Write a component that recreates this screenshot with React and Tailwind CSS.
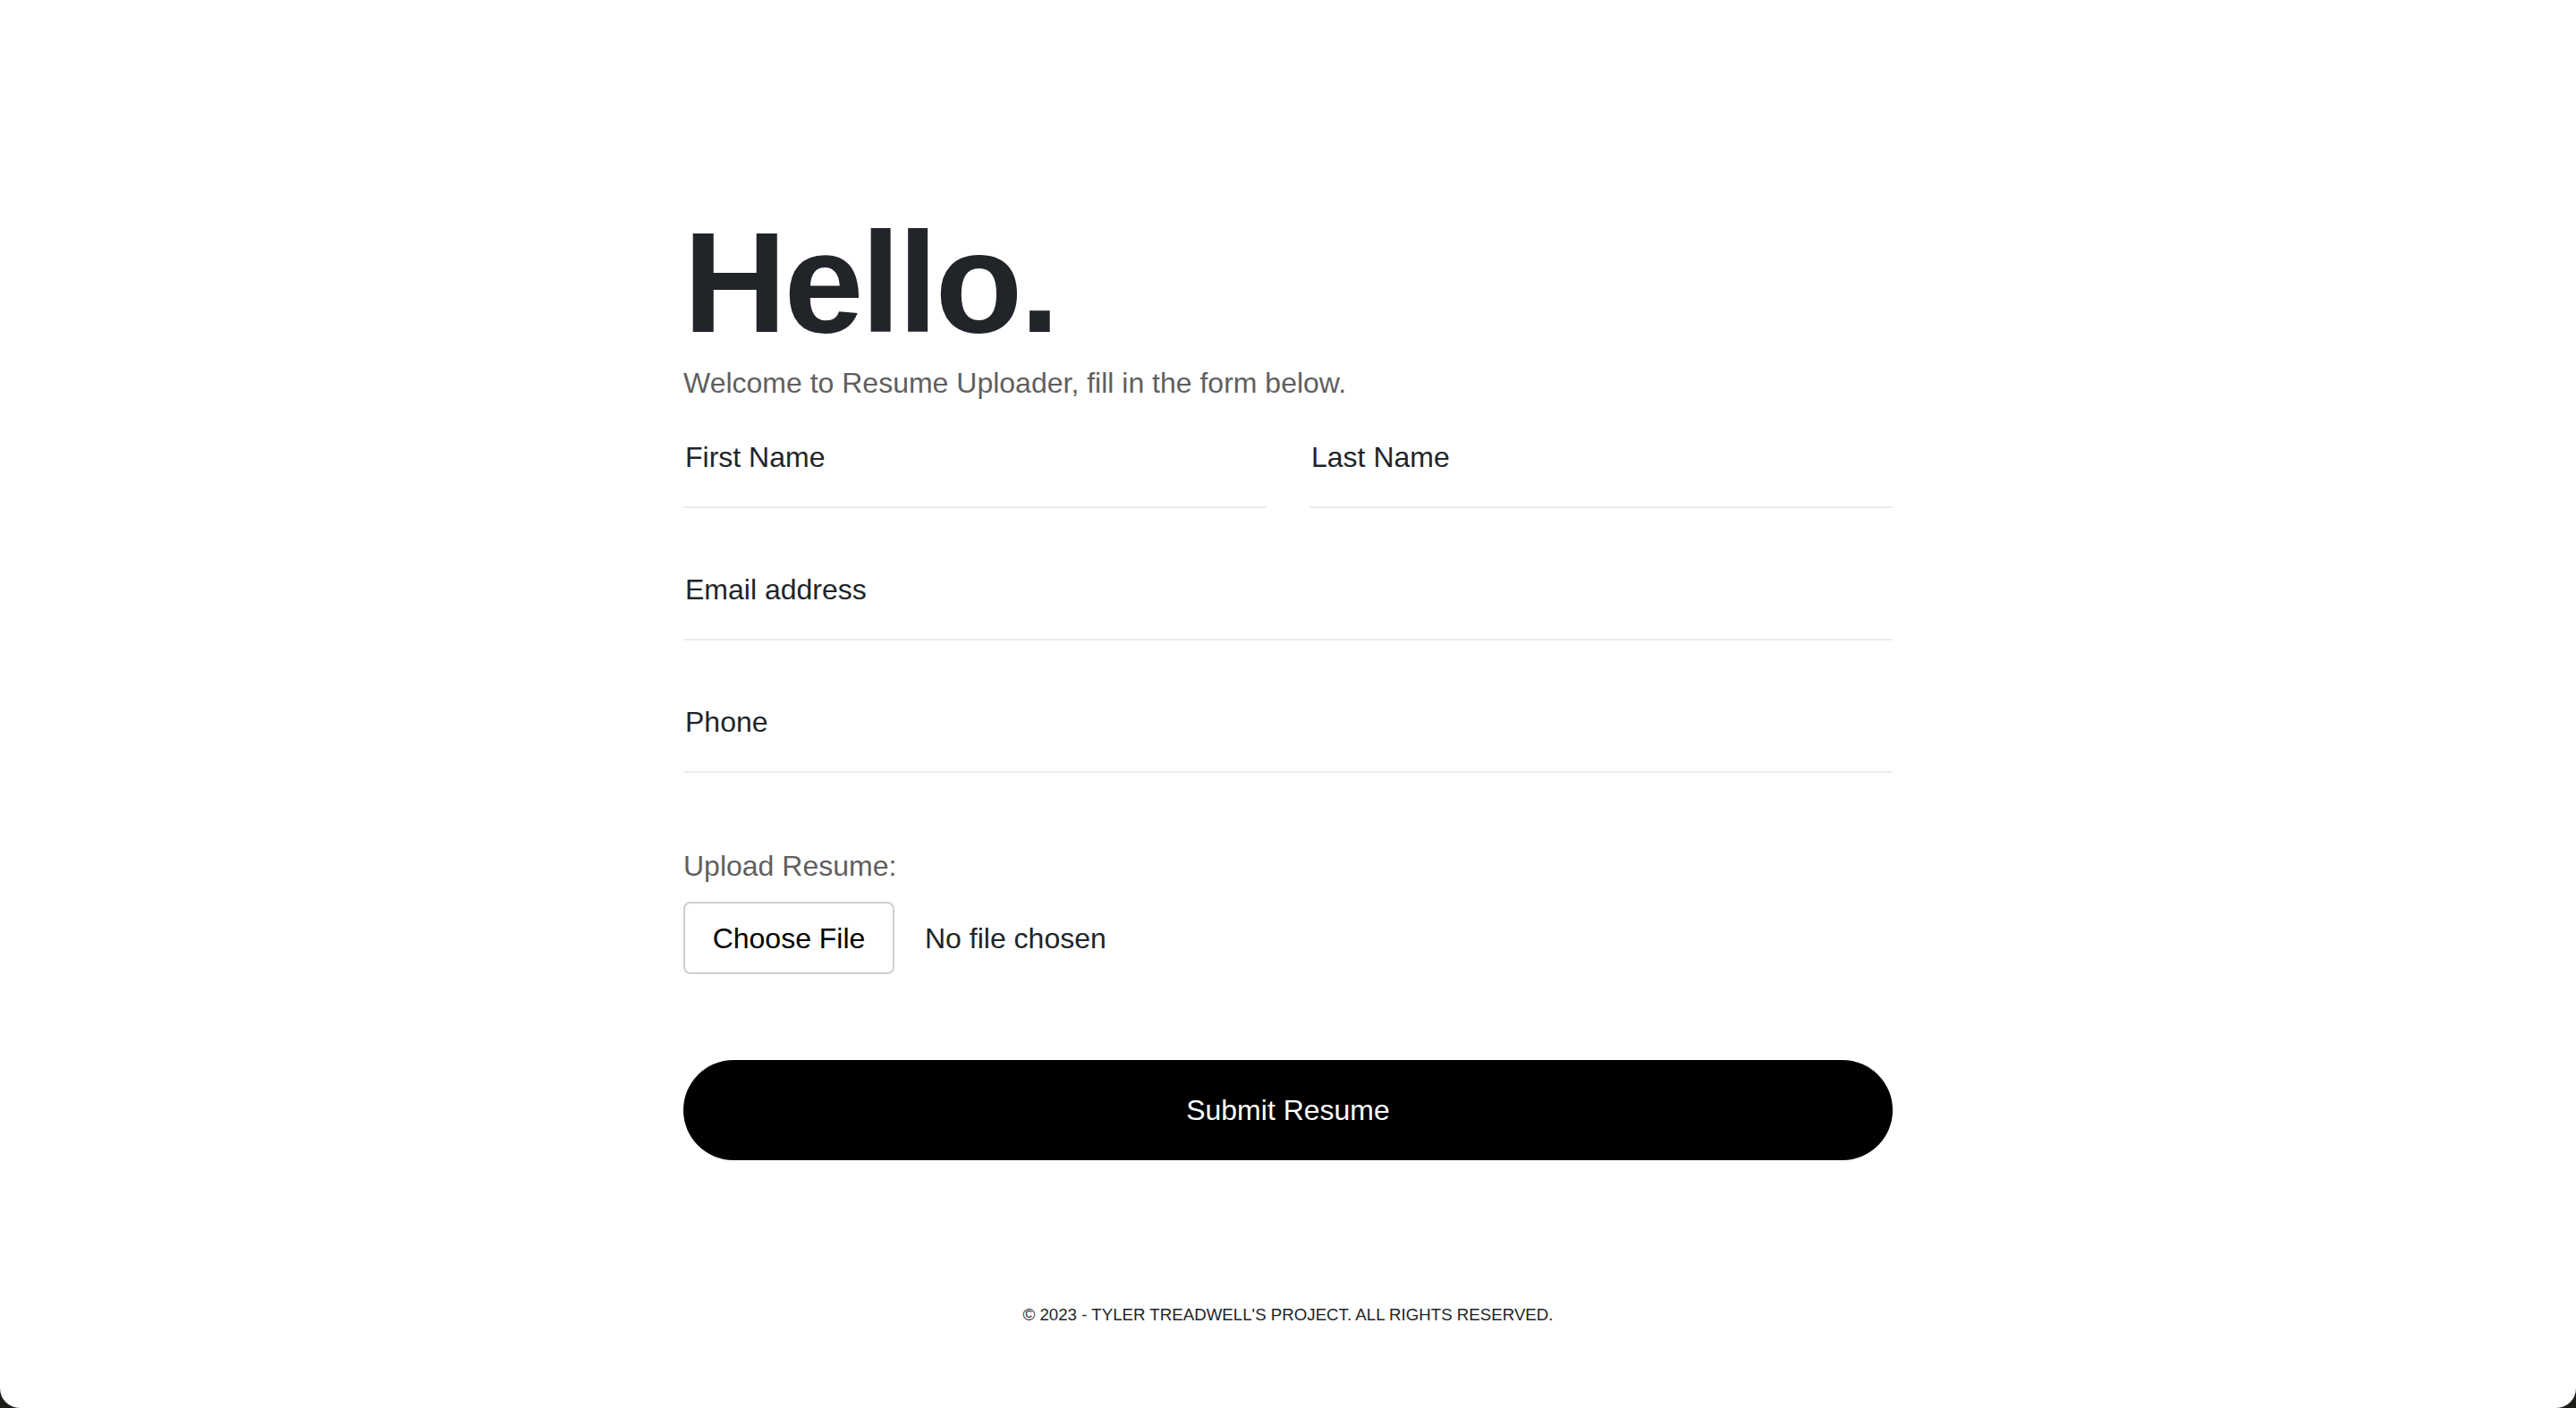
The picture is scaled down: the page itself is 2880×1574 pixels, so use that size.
import React from 'react'

const font = { fontFamily: '"Liberation Sans", Arial, Helvetica, sans-serif' }

function Field({ label, className = '' }) {
  return (
    <div className={`h-[116px] border-b-2 border-[#ebebeb] ${className}`}>
      <label className="block pt-[35px] pl-[2px] text-[32px] leading-[48px] text-[#212529]">
        {label}
      </label>
    </div>
  )
}

export default function App() {
  return (
    <div className="min-h-[1574px] bg-[#1d1e1a]" style={font}>
      <div className="h-[1574px] bg-white rounded-b-[22px] flex flex-col">
        <main className="w-[1352px] mx-auto pt-[228px]">
          <h1 className="text-[160px] leading-[176px] font-bold tracking-[-3px] text-[#212529]">
            Hello.
          </h1>
          <p className="text-[32px] leading-[48px] text-[#5f5f5f]">
            Welcome to Resume Uploader, fill in the form below.
          </p>

          <form className="flex flex-col gap-[32px]" onSubmit={(e) => e.preventDefault()}>
            <div className="grid grid-cols-2 gap-[48px]">
              <Field label="First Name" />
              <Field label="Last Name" />
            </div>
            <Field label="Email address" />
            <Field label="Phone" />
          </form>

          <div className="mt-[80px]">
            <p className="text-[32px] leading-[48px] text-[#5f5f5f]">Upload Resume:</p>
            <div className="mt-[16px] flex items-center gap-[34px]">
              <button
                type="button"
                className="w-[236px] h-[81px] rounded-[8px] border-2 border-[#cfcfcf] bg-white text-[32px] text-black"
              >
                Choose File
              </button>
              <span className="text-[32px] text-[#212529]">No file chosen</span>
            </div>
          </div>

          <button
            type="button"
            className="mt-[96px] w-full h-[112px] rounded-full bg-black text-white text-[32px]"
          >
            Submit Resume
          </button>
        </main>

        <footer className="mt-[159px] text-center text-[18.7px] leading-[28px] text-[#212529]">
          © 2023 - TYLER TREADWELL'S PROJECT. ALL RIGHTS RESERVED.
        </footer>
      </div>
    </div>
  )
}
